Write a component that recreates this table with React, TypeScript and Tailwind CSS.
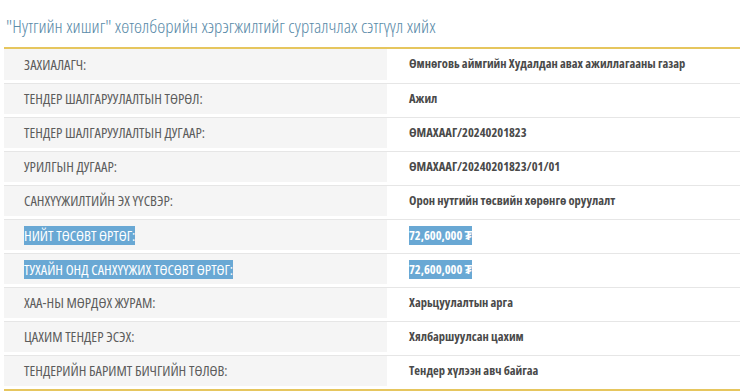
const rows: { label: string; value: string; selected?: boolean }[] = [
  { label: "ЗАХИАЛАГЧ:", value: "Өмнөговь аймгийн Худалдан авах ажиллагааны газар" },
  { label: "ТЕНДЕР ШАЛГАРУУЛАЛТЫН ТӨРӨЛ:", value: "Ажил" },
  { label: "ТЕНДЕР ШАЛГАРУУЛАЛТЫН ДУГААР:", value: "ӨМАХААГ/20240201823" },
  { label: "УРИЛГЫН ДУГААР:", value: "ӨМАХААГ/20240201823/01/01" },
  { label: "САНХҮҮЖИЛТИЙН ЭХ ҮҮСВЭР:", value: "Орон нутгийн төсвийн хөрөнгө оруулалт" },
  { label: "НИЙТ ТӨСӨВТ ӨРТӨГ:", value: "72,600,000 ₮", selected: true },
  { label: "ТУХАЙН ОНД САНХҮҮЖИХ ТӨСӨВТ ӨРТӨГ:", value: "72,600,000 ₮", selected: true },
  { label: "ХАА-НЫ МӨРДӨХ ЖУРАМ:", value: "Харьцуулалтын арга" },
  { label: "ЦАХИМ ТЕНДЕР ЭСЭХ:", value: "Хялбаршуулсан цахим" },
  { label: "ТЕНДЕРИЙН БАРИМТ БИЧГИЙН ТӨЛӨВ:", value: "Тендер хүлээн авч байгаа" },
];

export default function App() {
  return (
    <div className="w-[740px] h-[391px] bg-white overflow-hidden font-['Open_Sans',sans-serif] font-stretch-[75%]">
      <h1 className="pl-[6px] pt-[14px] h-[47px] text-[19px] leading-[24px] text-[#5a8ba9] font-light whitespace-nowrap">
        "Нутгийн хишиг" хөтөлбөрийн хэрэгжилтийг сурталчлах сэтгүүл хийх
      </h1>

      <div className="ml-[4px] border-t-2 border-b-2 border-[#e6c65e]">
        {rows.map((r, i) => (
          <div
            key={i}
            className={`flex h-[34px] pb-[3px] ${i > 0 ? "border-t border-[#e6e6e6]" : ""}`}
          >
            <div className="w-[383px] bg-[#f5f5f5] flex items-center pl-[20px] text-[14.5px] text-[#5c5c5c]">
              <span className={r.selected ? "bg-[#69a8d4] text-white leading-[19px]" : ""}>
                {r.label}
              </span>
            </div>
            <div className="flex-1 flex items-center pl-[22px] text-[12.5px] font-bold text-[#4a4a4a]">
              <span className={r.selected ? "bg-[#69a8d4] text-white leading-[19px]" : ""}>
                {r.value}
              </span>
            </div>
          </div>
        ))}
      </div>
    </div>
  );
}
